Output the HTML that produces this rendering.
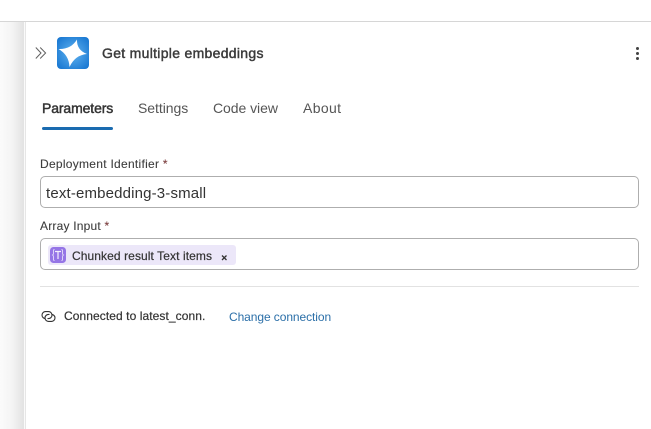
<!DOCTYPE html>
<html>
<head>
<meta charset="utf-8">
<style>
html,body{margin:0;padding:0;background:#fff;}
body{position:relative;width:651px;height:429px;overflow:hidden;font-family:"Liberation Sans",sans-serif;}
.a{position:absolute;white-space:nowrap;}
</style>
</head>
<body>
<div class="a" style="left:0;top:22px;width:24px;height:407px;background:linear-gradient(90deg,#fbfbfb 0,#f4f4f4 50%,#e2e2e2 100%);"></div>
<div class="a" style="left:24px;top:22px;width:1px;height:407px;background:#fafafa;"></div>
<div class="a" style="left:25px;top:22px;width:1px;height:407px;background:#e6e6e6;"></div>
<div class="a" style="left:0;top:21px;width:651px;height:1px;background:#d6d6d6;"></div>

<svg class="a" style="left:35px;top:46px;" width="13" height="14" viewBox="0 0 13 14" fill="none" stroke="#616161" stroke-width="1">
<path d="M.8 1.5L6 7L.8 12.5"/><path d="M5.2 1.5L10.6 7L5.2 12.5"/>
</svg>

<svg class="a" style="left:57px;top:37px;" width="32" height="32" viewBox="0 0 32 32">
<defs><radialGradient id="g" cx="50%" cy="50%" r="70%"><stop offset="0" stop-color="#62b4f0"/><stop offset="1" stop-color="#1272cf"/></radialGradient></defs>
<rect width="32" height="32" rx="4" fill="url(#g)"/>
<path d="M20 2.5Q19.5 13 30 17Q18 18 12.5 30Q12 18 1.5 12Q14 12.5 20 2.5Z" fill="#fff"/>
</svg>

<div class="a" style="left:102px;top:45px;font-size:14px;line-height:17px;color:#3b3b3b;-webkit-text-stroke:.45px #3b3b3b;letter-spacing:.3px;">Get multiple embeddings</div>

<svg class="a" style="left:634px;top:45px;" width="8" height="16"><rect x="2" y="2" width="3" height="3" rx="1.5" fill="#424242"/><rect x="2" y="7" width="3" height="3" rx="1.5" fill="#424242"/><rect x="2" y="12" width="3" height="3" rx="1.5" fill="#424242"/></svg>

<div class="a" style="left:42px;top:100px;font-size:14px;line-height:17px;color:#333;-webkit-text-stroke:.45px #333;letter-spacing:-.12px;">Parameters</div>
<div class="a" style="left:42px;top:127px;width:71px;height:3px;border-radius:2px;background:#1a6bb0;"></div>
<div class="a" style="left:138px;top:100px;font-size:14px;line-height:17px;color:#555;letter-spacing:-.05px;">Settings</div>
<div class="a" style="left:213px;top:100px;font-size:14px;line-height:17px;color:#555;letter-spacing:-.05px;">Code view</div>
<div class="a" style="left:303px;top:100px;font-size:14px;line-height:17px;color:#555;letter-spacing:.35px;">About</div>

<div class="a" style="left:40px;top:157px;font-size:12px;line-height:15px;color:#3d3d3d;letter-spacing:.28px;-webkit-text-stroke:.1px #3d3d3d;">Deployment Identifier <span style="color:#8a3a3a;">*</span></div>
<div class="a" style="left:40px;top:176px;width:597px;height:30px;border:1px solid #aeaeae;border-radius:5px;"></div>
<div class="a" style="left:46px;top:185px;font-size:15px;line-height:18px;color:#333;letter-spacing:.16px;">text-embedding-3-small</div>

<div class="a" style="left:40px;top:219px;font-size:12px;line-height:15px;color:#3d3d3d;letter-spacing:.2px;-webkit-text-stroke:.1px #3d3d3d;">Array Input <span style="color:#8a3a3a;">*</span></div>
<div class="a" style="left:40px;top:238px;width:597px;height:30px;border:1px solid #aeaeae;border-radius:5px;"></div>
<div class="a" style="left:48px;top:245px;width:188px;height:20px;border-radius:3px;background:#ece7f9;"></div>
<svg class="a" style="left:50px;top:247px;" width="16" height="16" viewBox="0 0 16 16" fill="none">
<rect width="16" height="16" rx="3.5" fill="#9575e6"/>
<path d="M4.5 2.5C3 2.5 3.5 4 3.5 6C3.5 7.5 2.6 8 2.6 8C2.6 8 3.5 8.5 3.5 10C3.5 12 3 13.5 4.5 13.5M11.5 2.5C13 2.5 12.5 4 12.5 6C12.5 7.5 13.4 8 13.4 8C13.4 8 12.5 8.5 12.5 10C12.5 12 13 13.5 11.5 13.5" stroke="#e6dffa" stroke-width=".9"/>
<path d="M5 4.5H11M8 4.5V12" stroke="#f3effc" stroke-width="1.2"/>
</svg>
<div class="a" style="left:72px;top:249px;font-size:12px;line-height:15px;color:#333;-webkit-text-stroke:.2px #333;letter-spacing:.09px;">Chunked result Text items</div>
<svg class="a" style="left:221px;top:254px;" width="7" height="7"><path d="M1 1.5L5.5 6M5.5 1.5L1 6" stroke="#333" stroke-width="1.3"/></svg>

<div class="a" style="left:40px;top:286px;width:599px;height:1px;background:#e2e2e2;"></div>

<svg class="a" style="left:41px;top:310px;" width="15" height="13" viewBox="0 0 15 13" fill="none" stroke="#333" stroke-width="1.1">
<path d="M4.5 8.6A3.5 3.5 0 0 1 4.5 1.6H7.5A3.5 3.5 0 0 1 7.5 8.6H6.5"/>
<path d="M10.5 4.4A3.5 3.5 0 0 1 10.5 11.4H7.5A3.5 3.5 0 0 1 7.5 4.4H8.5"/>
</svg>
<div class="a" style="left:64px;top:309px;font-size:12px;line-height:15px;color:#333;-webkit-text-stroke:.2px #333;letter-spacing:.08px;">Connected to latest_conn.</div>
<div class="a" style="left:229px;top:310px;font-size:12px;line-height:15px;color:#2b6fa8;letter-spacing:-.08px;">Change connection</div>
</body>
</html>
